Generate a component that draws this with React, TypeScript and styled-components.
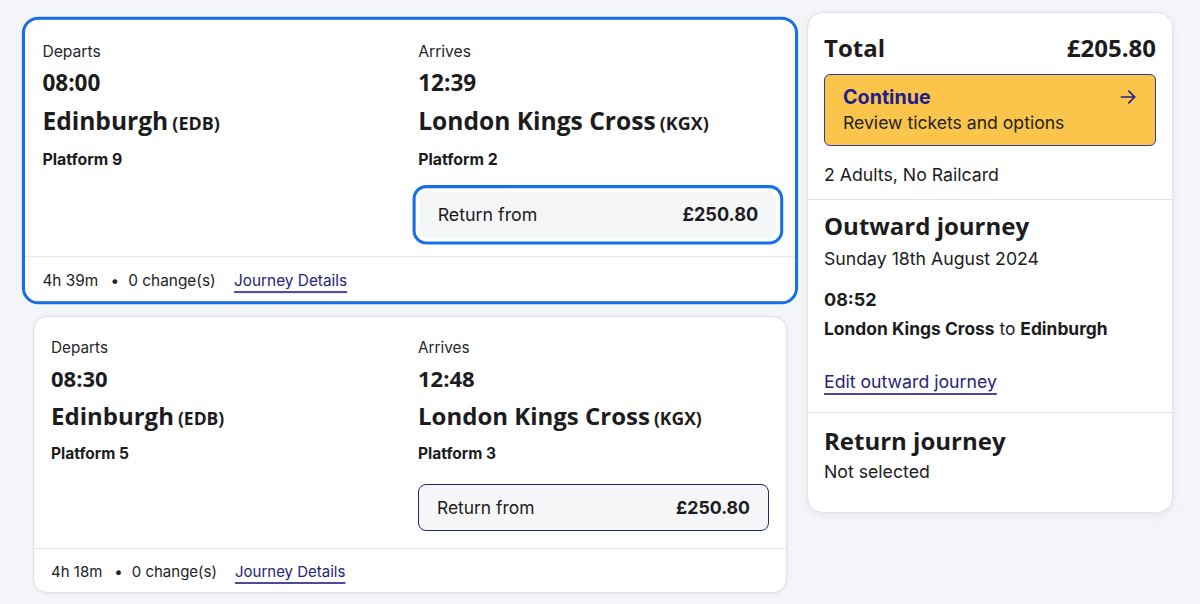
import React from "react";
import styled, { createGlobalStyle, css } from "styled-components";

const Global = createGlobalStyle`
  html, body { margin: 0; padding: 0; background: #f4f5f8; }
  body { font-family: Inter, "Liberation Sans", sans-serif; color: #1c1c1e; -webkit-font-smoothing: antialiased; }
  * { box-sizing: border-box; }
`;

const NAVY = "#25247b";
const BLUE = "#1670e3";

const Page = styled.div`
  display: flex;
  align-items: flex-start;
  gap: 20px;
  padding: 12px 27px 12px 33px;
  width: 1200px;
  height: 604px;
  overflow: hidden;
`;

const LeftColumn = styled.div`
  width: 754px;
  flex: none;
  display: flex;
  flex-direction: column;
  gap: 17px;
  padding-top: 10px;
`;

const Card = styled.section<{ $selected?: boolean }>`
  background: #fff;
  border: 1px solid #dfe0e6;
  border-radius: 14px;
  box-shadow: 0 1px 4px rgba(20, 20, 40, 0.06);
  ${(p) =>
    p.$selected &&
    css`
      border-color: ${BLUE};
      box-shadow: 0 0 0 2px ${BLUE};
      transform: scale(1.024);
    `}
`;

const CardBody = styled.div`
  display: grid;
  grid-template-columns: 1fr 1fr;
  column-gap: 16px;
  padding: 20px 17px 17px;
`;

const Stop = styled.div`
  display: flex;
  flex-direction: column;
`;

const Label = styled.div`
  font-size: 15.3px;
  line-height: 22px;
  color: #262628;
`;

const Time = styled.div`
  font-family: "Open Sans", "Liberation Sans", sans-serif;
  font-weight: 700;
  font-size: 22px;
  line-height: 30px;
  margin-top: 4px;
  color: #1c1c1e;
`;

const Station = styled.div`
  font-family: "Open Sans", "Liberation Sans", sans-serif;
  font-weight: 700;
  font-size: 24px;
  line-height: 36px;
  margin-top: 5px;
  color: #1c1c1e;
  white-space: nowrap;
`;

const Code = styled.span`
  font-size: 17.5px;
  line-height: 1;
  margin-left: 4px;
`;

const Platform = styled.div`
  font-size: 15.5px;
  font-weight: 700;
  line-height: 22px;
  margin-top: 9px;
`;

const PriceBox = styled.div<{ $selected?: boolean }>`
  margin-top: 19px;
  height: 47px;
  display: flex;
  align-items: center;
  justify-content: space-between;
  padding: 0 18px;
  background: #f5f6f8;
  border: 1px solid ${NAVY};
  border-radius: 8px;
  font-size: 17.4px;
  ${(p) =>
    p.$selected &&
    css`
      border-color: #ffffff;
      box-shadow: 0 0 0 2.5px #ffffff, 0 0 0 5.5px ${BLUE};
    `}
`;

const PriceValue = styled.span`
  font-weight: 700;
  font-size: 17.7px;
`;

const CardFooter = styled.div`
  display: flex;
  align-items: center;
  border-top: 1px solid #e3e4ea;
  padding: 12px 17px 9px;
  font-size: 15px;
  line-height: 22px;
  color: #222;
`;

const Dot = styled.span`
  margin: 0 9px 0 12px;
  font-size: 15px;
`;

const Link = styled.a`
  color: ${NAVY};
  text-decoration: underline;
  text-decoration-color: #4b4a9e;
  text-decoration-thickness: 1.5px;
  text-underline-offset: 5px;
  cursor: pointer;
`;

const FooterLink = styled(Link)`
  margin-left: 18px;
`;

const Panel = styled.aside`
  width: 366px;
  flex: none;
  background: #fff;
  border: 1px solid #e1e2e8;
  border-radius: 16px;
  box-shadow: 0 2px 8px rgba(20, 20, 40, 0.07);
  overflow: hidden;
`;

const PanelSection = styled.div<{ $top: number; $bottom: number; $divider?: boolean }>`
  padding: ${(p) => p.$top}px 16px ${(p) => p.$bottom}px;
  ${(p) => p.$divider && css`border-bottom: 1px solid #e1e2e8;`}
`;

const TotalRow = styled.div`
  display: flex;
  justify-content: space-between;
  align-items: center;
  font-family: "Open Sans", "Liberation Sans", sans-serif;
  font-weight: 700;
  font-size: 24px;
  line-height: 32px;
  color: #1c1c1e;
`;

const ContinueButton = styled.button`
  margin-top: 10px;
  width: 100%;
  display: flex;
  justify-content: space-between;
  align-items: flex-start;
  text-align: left;
  background: #fbc54b;
  border: 1px solid #3b3a8e;
  border-radius: 6px;
  padding: 9px 17px 10px 18px;
  font-family: inherit;
  cursor: pointer;
`;

const ButtonText = styled.div`
  display: flex;
  flex-direction: column;
`;

const ButtonTitle = styled.span`
  font-size: 19.7px;
  font-weight: 700;
  line-height: 26px;
  color: #1f1e8a;
`;

const ButtonSub = styled.span`
  font-size: 17.6px;
  line-height: 25px;
  color: #222;
`;

const Arrow = styled.svg`
  margin-top: 3px;
  flex: none;
`;

const BodyText = styled.div<{ $gap?: number; $bold?: boolean }>`
  font-size: ${(p) => (p.$bold ? 18 : 17.7)}px;
  line-height: 24px;
  margin-top: ${(p) => p.$gap ?? 0}px;
  font-weight: ${(p) => (p.$bold ? 700 : 400)};
  color: #1c1c1e;
`;

const Route = styled.div`
  font-size: 17.4px;
  line-height: 24px;
  margin-top: 5px;
  color: #1c1c1e;
  b { font-weight: 700; }
`;

const Heading = styled.h2`
  margin: 0;
  font-family: "Open Sans", "Liberation Sans", sans-serif;
  font-weight: 700;
  font-size: 24px;
  line-height: 30px;
  color: #1c1c1e;
`;

const EditLink = styled(Link)`
  display: inline-block;
  margin-top: 29px;
  font-size: 17.7px;
  line-height: 24px;
`;

type Journey = {
  dep: string;
  arr: string;
  depPlat: string;
  arrPlat: string;
  duration: string;
  selected?: boolean;
};

const journeys: Journey[] = [
  { dep: "08:00", arr: "12:39", depPlat: "9", arrPlat: "2", duration: "4h 39m", selected: true },
  { dep: "08:30", arr: "12:48", depPlat: "5", arrPlat: "3", duration: "4h 18m" },
];

function JourneyCard({ j }: { j: Journey }) {
  return (
    <Card $selected={j.selected}>
      <CardBody>
        <Stop>
          <Label>Departs</Label>
          <Time>{j.dep}</Time>
          <Station>
            Edinburgh<Code>(EDB)</Code>
          </Station>
          <Platform>Platform {j.depPlat}</Platform>
        </Stop>
        <Stop>
          <Label>Arrives</Label>
          <Time>{j.arr}</Time>
          <Station>
            London Kings Cross<Code>(KGX)</Code>
          </Station>
          <Platform>Platform {j.arrPlat}</Platform>
          <PriceBox $selected={j.selected}>
            <span>Return from</span>
            <PriceValue>£250.80</PriceValue>
          </PriceBox>
        </Stop>
      </CardBody>
      <CardFooter>
        <span>{j.duration}</span>
        <Dot>•</Dot>
        <span>0 change(s)</span>
        <FooterLink>Journey Details</FooterLink>
      </CardFooter>
    </Card>
  );
}

export default function App() {
  return (
    <>
      <Global />
      <Page>
        <LeftColumn>
          {journeys.map((j) => (
            <JourneyCard key={j.dep} j={j} />
          ))}
        </LeftColumn>
        <Panel>
          <PanelSection $top={19} $bottom={12} $divider>
            <TotalRow>
              <span>Total</span>
              <span>£205.80</span>
            </TotalRow>
            <ContinueButton>
              <ButtonText>
                <ButtonTitle>Continue</ButtonTitle>
                <ButtonSub>Review tickets and options</ButtonSub>
              </ButtonText>
              <Arrow width="20" height="20" viewBox="0 0 24 24" fill="none" stroke="#1f1e8a" strokeWidth="1.9" strokeLinecap="round" strokeLinejoin="round">
                <path d="M4 12h16" />
                <path d="M13 5l7 7-7 7" />
              </Arrow>
            </ContinueButton>
            <BodyText $gap={17}>2 Adults, No Railcard</BodyText>
          </PanelSection>
          <PanelSection $top={11} $bottom={18} $divider>
            <Heading>Outward journey</Heading>
            <BodyText $gap={6}>Sunday 18th August 2024</BodyText>
            <BodyText $gap={17} $bold>08:52</BodyText>
            <Route>
              <b>London Kings Cross</b> to <b>Edinburgh</b>
            </Route>
            <EditLink>Edit outward journey</EditLink>
          </PanelSection>
          <PanelSection $top={13} $bottom={28}>
            <Heading>Return journey</Heading>
            <BodyText $gap={4}>Not selected</BodyText>
          </PanelSection>
        </Panel>
      </Page>
    </>
  );
}
